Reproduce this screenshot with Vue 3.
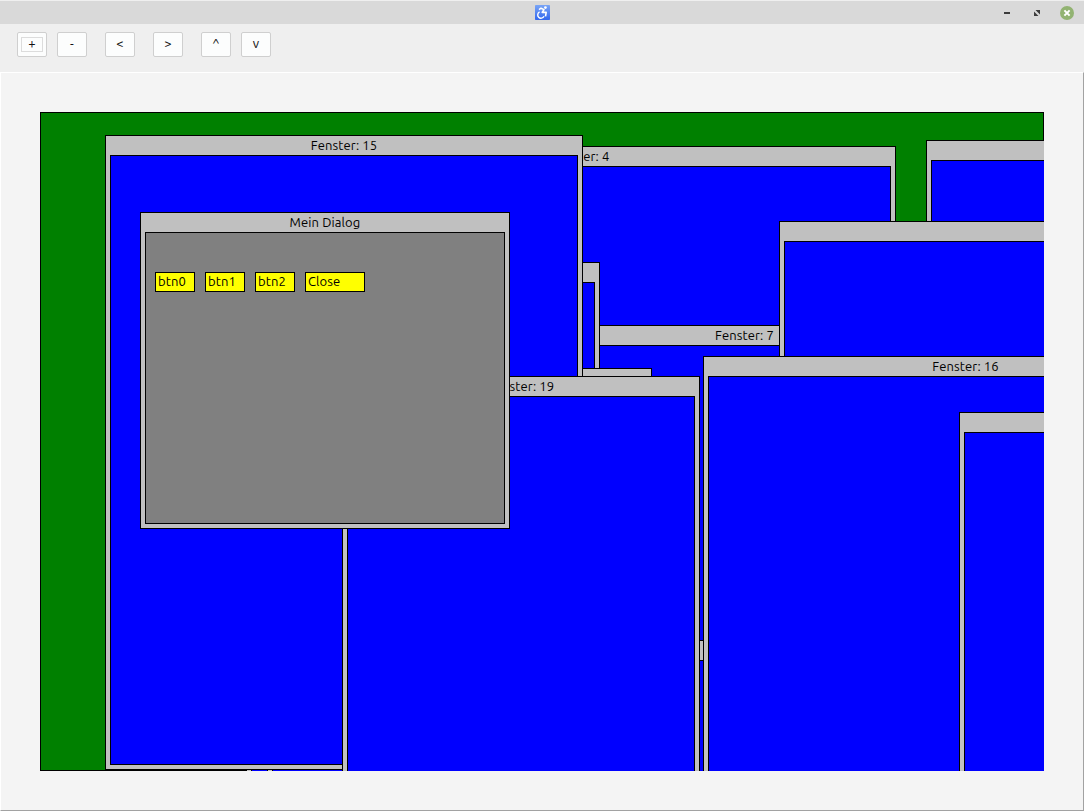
<script setup>
const tools = [
  { label: '+', focused: true },
  { label: '-' },
  { label: '<', spaced: true },
  { label: '>', spaced: true },
  { label: '^', spaced: true },
  { label: 'v' },
]

// Stacked back to front; coordinates are relative to the desktop.
const windows = [
  { title: 'Fenster: 4', x: 224, y: 34, w: 632, h: 400 },
  { title: '', x: 886, y: 28, w: 400, h: 300 },
  { title: 'Fenster: 7', x: 520, y: 213, w: 369, h: 500 },
  { title: '', x: 206, y: 150, w: 354, h: 600 },
  { title: '', x: 560, y: 528, w: 400, h: 300 },
  { title: '', x: 739, y: 109, w: 596, h: 500 },
  { title: '', x: 227, y: 256, w: 385, h: 500 },
  { title: 'Fenster: 15', x: 65, y: 23, w: 478, h: 635 },
  { title: 'Fenster: 16', x: 663, y: 244, w: 525, h: 600 },
  { title: '', x: 919, y: 300, w: 500, h: 500 },
  { title: 'Fenster: 19', x: 302, y: 264, w: 358, h: 500 },
  {
    title: 'Mein Dialog', x: 100, y: 100, w: 370, h: 317, dialog: true,
    buttons: ['btn0', 'btn1', 'btn2', 'Close'],
  },
]

const place = (w) => ({
  left: w.x + 'px', top: w.y + 'px', width: w.w + 'px', height: w.h + 'px',
})
</script>

<template>
  <div class="app">
    <header class="titlebar">
      <svg class="logo" width="15" height="15" viewBox="0 0 15 15">
        <defs>
          <linearGradient id="logoFill" x1="0" y1="0" x2="0" y2="1">
            <stop offset="0" stop-color="#7aa5f5" />
            <stop offset="1" stop-color="#3267ee" />
          </linearGradient>
        </defs>
        <rect width="15" height="15" rx="0.8" fill="url(#logoFill)" />
        <circle cx="10.4" cy="2.6" r="1.4" fill="#fff" />
        <path d="M4 4.6 6 3.2 9 4.6 7.2 7.4h4l-.7 4" fill="none" stroke="#fff" stroke-width="1.6" stroke-linejoin="round" />
        <path d="M4.6 6.9a3.3 3.3 0 1 0 4.4 4.4" fill="none" stroke="#fff" stroke-width="1.4" />
      </svg>
      <svg class="controls" width="74" height="16" viewBox="0 0 74 16">
        <rect x="4" y="7" width="6" height="2" fill="#3c3c3c" />
        <path d="M35.5 5H40v4.5ZM34 6.5V11h4.5Z" fill="#3c3c3c" />
        <circle cx="67" cy="8" r="7" fill="#92b372" />
        <path d="m64.4 5.4 5.2 5.2m0-5.2-5.2 5.2" stroke="#fff" stroke-width="2" />
      </svg>
    </header>

    <nav class="toolbar">
      <button
        v-for="t in tools" :key="t.label" class="tool"
        :class="{ focused: t.focused, spaced: t.spaced }"
      ><span>{{ t.label }}</span></button>
    </nav>

    <main class="client">
      <div class="desktop">
        <section
          v-for="(w, i) in windows" :key="i" class="win"
          :class="{ dialog: w.dialog }" :style="place(w)"
        >
          <div class="caption"><span>{{ w.title }}</span></div>
          <div class="body">
            <div v-for="b in w.buttons" :key="b" class="btn" :class="{ wide: b === 'Close' }">{{ b }}</div>
          </div>
        </section>
      </div>
    </main>
  </div>
</template>

<style>
body { overflow: hidden; }
</style>

<style scoped>
.app {
  display: flex;
  flex-direction: column;
  box-sizing: border-box;
  width: 1084px;
  height: 811px;
  background: #efefef;
  font: 13px/16px Ubuntu, "Noto Sans", "Open Sans", sans-serif;
  letter-spacing: 0.12px;
  color: #000;
}
.titlebar {
  display: grid;
  grid-template-columns: 1fr 15px 1fr;
  align-items: center;
  box-sizing: border-box;
  height: 24px;
  border-top: 1px solid #efefef;
  background: #d9d9d9;
}
.logo { grid-column: 2; display: block; }
.controls { justify-self: end; margin-right: 10px; display: block; }
.toolbar {
  display: flex;
  box-sizing: border-box;
  height: 48px;
  padding: 8px 17px;
  gap: 10px;
}
.tool {
  box-sizing: border-box;
  width: 30px;
  height: 25px;
  padding: 3px;
  border: 1px solid #cfcfcf;
  border-radius: 2px;
  background: #fcfdfd;
  font: inherit;
  color: #111;
}
.tool.spaced { margin-left: 8px; }
.tool span {
  display: flex;
  align-items: center;
  justify-content: center;
  box-sizing: border-box;
  height: 15px;
  padding-bottom: 2px;
  line-height: 11px;
  border: 1px solid transparent;
}
.tool.focused span { border-color: #dcdcdc; }
.client {
  flex: 1;
  box-sizing: border-box;
  padding: 39px;
  border: 1px solid;
  border-color: #fff #a2a2a2 #a2a2a2 #fff;
  background: #f4f4f4;
}
.desktop {
  position: relative;
  overflow: hidden;
  width: 1004px;
  height: 659px;
  background: #008000;
  box-shadow: inset 0 0 0 1px #000;
}
.win {
  position: absolute;
  display: flex;
  flex-direction: column;
  box-sizing: border-box;
  padding: 0 4px 4px;
  border: 1px solid #000;
  background: #c0c0c0;
}
.caption {
  height: 19px;
  line-height: 19px;
  text-align: center;
  white-space: nowrap;
}
.body {
  flex: 1;
  display: flex;
  align-items: flex-start;
  gap: 10px;
  border: 1px solid #000;
  background: #0000ff;
}
.dialog .body { padding: 39px 9px; background: #808080; }
.btn {
  box-sizing: border-box;
  width: 40px;
  height: 20px;
  padding-left: 2px;
  border: 1px solid #000;
  background: #ffff00;
  line-height: 17px;
}
.btn.wide { width: 60px; }
</style>
